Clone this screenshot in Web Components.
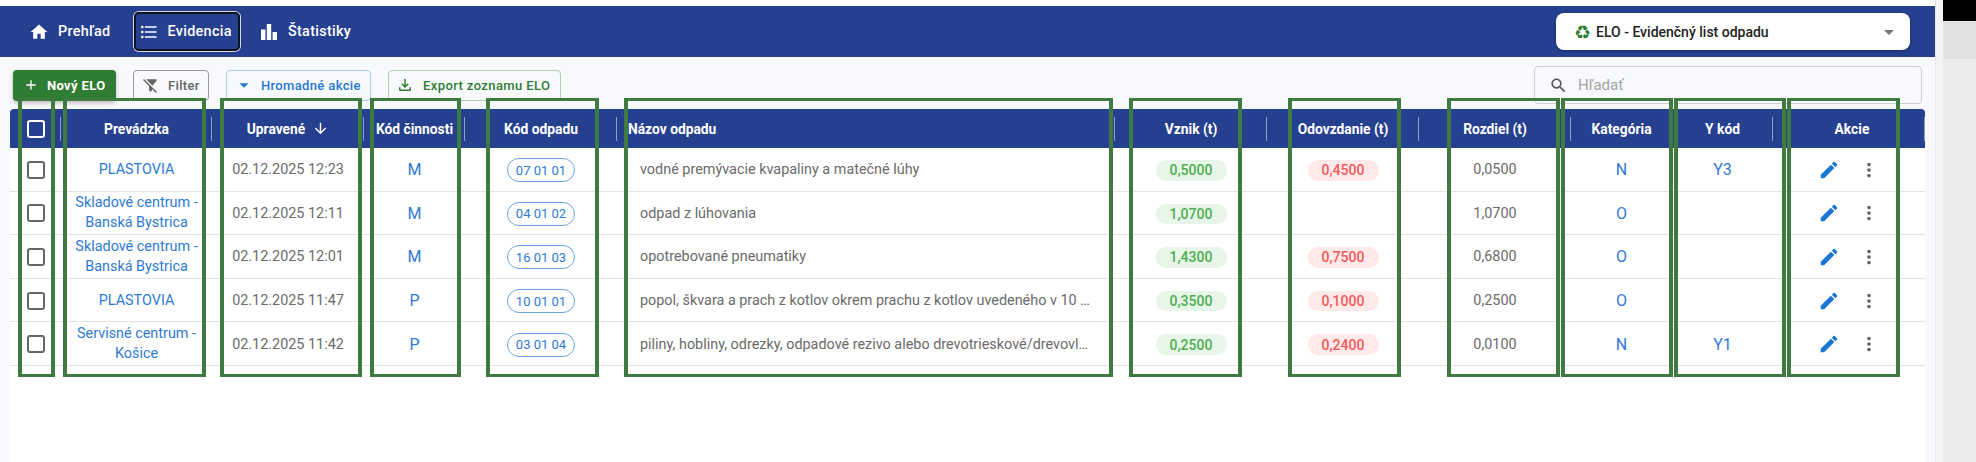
<!DOCTYPE html>
<html lang="sk">
<head>
<meta charset="utf-8">
<title>ELO</title>
<style>
    html, body { margin: 0; height: 100%; overflow: hidden; background: #fff; font-family: Roboto, "Liberation Sans", sans-serif; }
</style>
</head>
<body>
<elo-shell>
    <elo-nav>
        <elo-navitem icon="home">Prehľad</elo-navitem>
        <elo-navitem icon="list" active>Evidencia</elo-navitem>
        <elo-navitem icon="bars">Štatistiky</elo-navitem>
        <elo-select slot="end">ELO - Evidenčný list odpadu</elo-select>
    </elo-nav>
    <elo-toolbar>
        <elo-button kind="primary" icon="add">Nový ELO</elo-button>
        <elo-button kind="plain" icon="filteroff">Filter</elo-button>
        <elo-button kind="blue" icon="drop">Hromadné akcie</elo-button>
        <elo-button kind="green" icon="download">Export zoznamu ELO</elo-button>
        <elo-search slot="end"></elo-search>
    </elo-toolbar>
    <elo-table>
        <elo-row site="PLASTOVIA" date="02.12.2025 12:23" act="M" code="07 01 01" name="vodné premývacie kvapaliny a matečné lúhy" made="0,5000" given="0,4500" diff="0,0500" cat="N" y="Y3"></elo-row>
        <elo-row site="Skladové centrum - Banská Bystrica" date="02.12.2025 12:11" act="M" code="04 01 02" name="odpad z lúhovania" made="1,0700" diff="1,0700" cat="O"></elo-row>
        <elo-row site="Skladové centrum - Banská Bystrica" date="02.12.2025 12:01" act="M" code="16 01 03" name="opotrebované pneumatiky" made="1,4300" given="0,7500" diff="0,6800" cat="O"></elo-row>
        <elo-row site="PLASTOVIA" date="02.12.2025 11:47" act="P" code="10 01 01" name="popol, škvara a prach z kotlov okrem prachu z kotlov uvedeného v 10 …" made="0,3500" given="0,1000" diff="0,2500" cat="O"></elo-row>
        <elo-row site="Servisné centrum - Košice" date="02.12.2025 11:42" act="P" code="03 01 04" name="piliny, hobliny, odrezky, odpadové rezivo alebo drevotrieskové/drevovl…" made="0,2500" given="0,2400" diff="0,0100" cat="N" y="Y1"></elo-row>
    </elo-table>
</elo-shell>
<elo-marks></elo-marks>

<script>
const ICONS = {
    home: 'M10 20v-6h4v6h5v-8h3L12 3 2 12h3v8z',
    list: 'M4 10.5c-.83 0-1.5.67-1.5 1.5s.67 1.5 1.5 1.5 1.5-.67 1.5-1.5-.67-1.5-1.5-1.5zm0-6c-.83 0-1.5.67-1.5 1.5S3.17 7.5 4 7.5 5.5 6.83 5.5 6 4.83 4.5 4 4.5zm0 12c-.83 0-1.5.68-1.5 1.5s.68 1.5 1.5 1.5 1.5-.68 1.5-1.5-.67-1.5-1.5-1.5zM7 19h14v-2H7v2zm0-6h14v-2H7v2zm0-8v2h14V5H7z',
    bars: 'M4 9.5h4.4V20H4zM9.8 4h4.4v16H9.8zm5.8 8H20v8h-4.4z',
    add: 'M19 13h-6v6h-2v-6H5v-2h6V5h2v6h6v2z',
    filteroff: 'M14.77 12.42 20.8 4.8A1 1 0 0 0 20 3.2H5.97zM2.81 2.81 1.39 4.22 10 13v6a1 1 0 0 0 1 1h2a1 1 0 0 0 1-1v-2.17l5.78 5.78 1.41-1.41z',
    drop: 'M7 10l5 5 5-5z',
    download: 'M18 15v3H6v-3H4v3c0 1.1.9 2 2 2h12c1.1 0 2-.9 2-2v-3h-2zm-1-4-1.41-1.41L13 12.17V4h-2v8.17L8.41 9.59 7 11l5 5 5-5z',
    search: 'M15.5 14h-.79l-.28-.27C15.41 12.59 16 11.11 16 9.5 16 5.91 13.09 3 9.5 3S3 5.91 3 9.5 5.91 16 9.5 16c1.61 0 3.09-.59 4.23-1.57l.27.28v.79l5 4.99L20.49 19l-4.99-5zm-6 0C7.01 14 5 11.99 5 9.5S7.01 5 9.5 5 14 7.01 14 9.5 11.99 14 9.5 14z',
    edit: 'M3 17.25V21h3.75L17.81 9.94l-3.75-3.75L3 17.25zM20.71 7.04c.39-.39.39-1.02 0-1.41l-2.34-2.34c-.39-.39-1.02-.39-1.41 0l-1.83 1.83 3.75 3.75 1.83-1.83z',
    more: 'M12 8c1.1 0 2-.9 2-2s-.9-2-2-2-2 .9-2 2 .9 2 2 2zm0 2c-1.1 0-2 .9-2 2s.9 2 2 2 2-.9 2-2-.9-2-2-2zm0 6c-1.1 0-2 .9-2 2s.9 2 2 2 2-.9 2-2-.9-2-2-2z',
    down: 'M20 12l-1.41-1.41L13 16.17V4h-2v12.17l-5.58-5.59L4 12l8 8 8-8z'
};

function icon(name, size, color) {
    return `<svg width="${size}" height="${size}" viewBox="0 0 24 24" fill="${color}" style="display:block;flex:none"><path d="${ICONS[name]}"/></svg>`;
}

class EloShell extends HTMLElement {
    constructor() {
        super();
        this.attachShadow({ mode: 'open' });
        this.shadowRoot.innerHTML = `
            <style>
                :host {
                    display: grid;
                    grid-template-columns: 1935px 8px 1fr;
                    height: 462px;
                }
                .main {
                    display: flex;
                    flex-direction: column;
                    padding-top: 6px;
                    background: linear-gradient(#fff 6px, #f8f9fc 6px);
                    min-width: 0;
                }
                .gutter { background: #f4f4f2; border-left: 1px solid #e6e6e4; }
                .side { display: grid; grid-template-rows: 21px 38px 1fr; }
                .side div:nth-child(1) { background: #000; }
                .side div:nth-child(2) { background: #e2e2e2; }
                .side div:nth-child(3) { background: #ececec; }
            </style>
            <div class="main"><slot></slot></div>
            <div class="gutter"></div>
            <div class="side"><div></div><div></div><div></div></div>
        `;
    }
}

class EloNav extends HTMLElement {
    constructor() {
        super();
        this.attachShadow({ mode: 'open' });
        this.shadowRoot.innerHTML = `
            <style>
                :host {
                    display: flex;
                    align-items: center;
                    height: 51px;
                    background: #25408f;
                    padding: 0 25px 0 20px;
                    gap: 8px;
                    flex: none;
                }
                .end { margin-left: auto; }
            </style>
            <slot></slot>
            <div class="end"><slot name="end"></slot></div>
        `;
    }
}

class EloNavitem extends HTMLElement {
    constructor() {
        super();
        this.attachShadow({ mode: 'open' });
    }
    connectedCallback() {
        const active = this.hasAttribute('active');
        const name = this.getAttribute('icon');
        this.shadowRoot.innerHTML = `
            <style>
                :host { display: block; }
                .item {
                    display: flex;
                    align-items: center;
                    gap: 9px;
                    box-sizing: border-box;
                    width: 105px;
                    height: 39px;
                    padding: 0 0 0 9px;
                    border-radius: 5px;
                    color: #fff;
                    font: 500 14.4px Roboto, sans-serif;
                    letter-spacing: 0.3px;
                    white-space: nowrap;
                }
                .bars { gap: 7px; padding-left: 8px; }
                .active {
                    width: 106px;
                    margin-left: 1px;
                    margin-right: 1px;
                    gap: 8.5px;
                    padding-left: 3px;
                    border: 2px solid #0d1322;
                    box-shadow: 0 0 0 1px #d5d8e4;
                }
            </style>
            <div class="item ${name} ${active ? 'active' : ''}">${icon(name, name === 'bars' ? 24 : 20, '#fff')}<slot></slot></div>
        `;
    }
}

class EloSelect extends HTMLElement {
    constructor() {
        super();
        this.attachShadow({ mode: 'open' });
        this.shadowRoot.innerHTML = `
            <style>
                :host {
                    display: flex;
                    align-items: center;
                    box-sizing: border-box;
                    width: 354px;
                    height: 37px;
                    padding: 0 9px 0 18px;
                    background: #fff;
                    border-radius: 8px;
                    box-shadow: 0 1px 3px rgba(0, 0, 0, 0.35);
                    color: #222;
                    font: 500 14px Roboto, sans-serif;
                }
                .logo { font: 19px "DejaVu Sans", sans-serif; color: #2e7d32; width: 22px; line-height: 18px; }
                .text { flex: 1; }
            </style>
            <span class="logo">♻</span>
            <span class="text"><slot></slot></span>
            ${icon('drop', 24, '#777')}
        `;
    }
}

class EloToolbar extends HTMLElement {
    constructor() {
        super();
        this.attachShadow({ mode: 'open' });
        this.shadowRoot.innerHTML = `
            <style>
                :host {
                    display: flex;
                    align-items: center;
                    gap: 17px;
                    height: 38px;
                    padding: 9px 13px 5px;
                    flex: none;
                }
                .end { margin-left: auto; }
            </style>
            <slot></slot>
            <div class="end"><slot name="end"></slot></div>
        `;
    }
}

class EloButton extends HTMLElement {
    constructor() {
        super();
        this.attachShadow({ mode: 'open' });
    }
    connectedCallback() {
        const kinds = {
            primary: { color: '#fff', css: 'background:#2e7d32;width:103px;padding-left:10px;gap:8px;box-shadow:0 2px 4px rgba(0,0,0,.25);font-weight:700', size: 16 },
            plain: { color: '#666', css: 'border:1px solid #9a9a9a;width:76px;padding-left:8px;gap:9px', size: 17 },
            blue: { color: '#2378d6', css: 'border:1px solid #a6cdf5;width:145px;padding-left:6px;gap:6px', size: 22 },
            green: { color: '#2e7d32', css: 'border:1px solid #a9d3ab;width:173px;padding-left:7px;gap:9px;letter-spacing:.4px', size: 18 }
        };
        const k = kinds[this.getAttribute('kind')];
        this.shadowRoot.innerHTML = `
            <style>
                :host { display: block; }
                .btn {
                    display: flex;
                    align-items: center;
                    box-sizing: border-box;
                    height: 31px;
                    border-radius: 4px;
                    font: 500 13px Roboto, sans-serif;
                    letter-spacing: 0.35px;
                    white-space: nowrap;
                    color: ${k.color};
                    ${k.css};
                }
            </style>
            <div class="btn">${icon(this.getAttribute('icon'), k.size, k.color)}<slot></slot></div>
        `;
    }
}

class EloSearch extends HTMLElement {
    constructor() {
        super();
        this.attachShadow({ mode: 'open' });
        this.shadowRoot.innerHTML = `
            <style>
                :host {
                    display: flex;
                    align-items: center;
                    gap: 10px;
                    box-sizing: border-box;
                    width: 388px;
                    height: 38px;
                    padding-left: 14px;
                    background: #f8f9fc;
                    border: 1px solid #cfcfcf;
                    border-radius: 4px;
                    color: #a5a5a5;
                    font: 400 15px Roboto, sans-serif;
                }
            </style>
            ${icon('search', 19, '#555')}
            <span>Hľadať</span>
        `;
    }
}

class EloTable extends HTMLElement {
    constructor() {
        super();
        this.attachShadow({ mode: 'open' });
        const heads = ['', 'Prevádzka', 'Upravené', 'Kód činnosti', 'Kód odpadu', 'Názov odpadu', 'Vznik (t)', 'Odovzdanie (t)', 'Rozdiel (t)', 'Kategória', 'Y kód', 'Akcie'];
        const cells = heads.map((h, i) => {
            if (i === 0) return `<div class="th"><span class="box"></span></div>`;
            if (i === 2) return `<div class="th">${h}${icon('down', 17, '#fff')}</div>`;
            if (i === 5) return `<div class="th left">${h}</div>`;
            if (i === 11) return `<div class="th last">${h}</div>`;
            return `<div class="th">${h}</div>`;
        }).join('');
        this.shadowRoot.innerHTML = `
            <style>
                :host {
                    --cols: 51px 151px 152px 101px 152px 498px 152px 152px 152px 101px 101px 152px;
                    display: block;
                    flex: 1;
                    margin: 0 10px;
                    background: #fff;
                }
                .head {
                    display: grid;
                    grid-template-columns: var(--cols);
                    height: 39px;
                    background: #25408f;
                    border-radius: 4px 4px 0 0;
                    color: #fff;
                    font: 700 13.8px Roboto, sans-serif;
                }
                .th {
                    display: flex;
                    align-items: center;
                    justify-content: center;
                    gap: 7px;
                    white-space: nowrap;
                    background: linear-gradient(#8f9dc7, #8f9dc7) right center / 1.5px 24px no-repeat;
                }
                .left { justify-content: flex-start; padding-left: 11px; }
                .last { padding-left: 6px; }
                .box {
                    box-sizing: border-box;
                    width: 18px;
                    height: 18px;
                    border: 2px solid #fff;
                    border-radius: 3px;
                }
            </style>
            <div class="head">${cells}</div>
            <slot></slot>
        `;
    }
}

class EloRow extends HTMLElement {
    constructor() {
        super();
        this.attachShadow({ mode: 'open' });
    }
    connectedCallback() {
        const a = n => this.getAttribute(n) || '';
        const made = `<elo-pill tone="green">${a('made')}</elo-pill>`;
        const given = a('given') ? `<elo-pill tone="red">${a('given')}</elo-pill>` : '';
        this.shadowRoot.innerHTML = `
            <style>
                :host {
                    display: grid;
                    grid-template-columns: var(--cols);
                    box-sizing: border-box;
                    height: 43.6px;
                    padding-top: 1px;
                    border-bottom: 1px solid #e2e2e2;
                    color: #6b6b6b;
                    font: 400 14.4px Roboto, sans-serif;
                }
                .td {
                    display: flex;
                    align-items: center;
                    justify-content: center;
                    gap: 18px;
                    min-width: 0;
                }
                .site {
                    padding: 0 8px;
                    text-align: center;
                    line-height: 20px;
                    color: #2f7ad3;
                }
                .letter { color: #2f7ad3; font-size: 16px; }
                .name {
                    justify-content: flex-start;
                    padding-left: 23px;
                    white-space: nowrap;
                    overflow: hidden;
                }
                .box {
                    box-sizing: border-box;
                    width: 18px;
                    height: 18px;
                    border: 2px solid #666;
                    border-radius: 3px;
                }
            </style>
            <div class="td"><span class="box"></span></div>
            <div class="td site">${a('site')}</div>
            <div class="td">${a('date')}</div>
            <div class="td letter">${a('act')}</div>
            <div class="td"><elo-chip>${a('code')}</elo-chip></div>
            <div class="td name">${a('name')}</div>
            <div class="td">${made}</div>
            <div class="td">${given}</div>
            <div class="td">${a('diff')}</div>
            <div class="td letter">${a('cat')}</div>
            <div class="td letter">${a('y')}</div>
            <div class="td">${icon('edit', 22, '#1976d2')}${icon('more', 22, '#666')}</div>
        `;
    }
}

class EloChip extends HTMLElement {
    constructor() {
        super();
        this.attachShadow({ mode: 'open' });
        this.shadowRoot.innerHTML = `
            <style>
                :host {
                    display: flex;
                    align-items: center;
                    justify-content: center;
                    box-sizing: border-box;
                    width: 68px;
                    height: 24px;
                    margin-top: 1px;
                    border: 1px solid #6aa5e8;
                    border-radius: 12px;
                    color: #2f7ad3;
                    font: 400 13px Roboto, sans-serif;
                }
            </style>
            <slot></slot>
        `;
    }
}

class EloPill extends HTMLElement {
    constructor() {
        super();
        this.attachShadow({ mode: 'open' });
    }
    connectedCallback() {
        const green = this.getAttribute('tone') === 'green';
        this.shadowRoot.innerHTML = `
            <style>
                :host {
                    display: flex;
                    align-items: center;
                    justify-content: center;
                    width: 71px;
                    height: 20.5px;
                    margin-top: 1px;
                    border-radius: 10px;
                    background: ${green ? '#e8f5e9' : '#ffe9e9'};
                    color: ${green ? '#4caf50' : '#f25a5a'};
                    font: 500 14px Roboto, sans-serif;
                }
            </style>
            <slot></slot>
        `;
    }
}

// the green frames are annotations drawn over the finished screenshot
class EloMarks extends HTMLElement {
    constructor() {
        super();
        this.attachShadow({ mode: 'open' });
        const spans = [[18, 55], [63, 206], [220, 362], [370, 461], [486, 599], [624, 1113], [1129, 1242], [1288, 1401], [1447, 1560], [1561, 1673], [1674, 1786], [1787, 1900]];
        this.shadowRoot.innerHTML = `
            <style>
                :host { position: absolute; left: 0; top: 0; pointer-events: none; }
                div {
                    position: absolute;
                    top: 98px;
                    height: 279px;
                    box-sizing: border-box;
                    border: solid #3f7a40;
                    border-width: 3px 4px;
                }
            </style>
            ${spans.map(s => `<div style="left:${s[0]}px;width:${s[1] - s[0]}px"></div>`).join('')}
        `;
    }
}

customElements.define('elo-shell', EloShell);
customElements.define('elo-nav', EloNav);
customElements.define('elo-navitem', EloNavitem);
customElements.define('elo-select', EloSelect);
customElements.define('elo-toolbar', EloToolbar);
customElements.define('elo-button', EloButton);
customElements.define('elo-search', EloSearch);
customElements.define('elo-table', EloTable);
customElements.define('elo-row', EloRow);
customElements.define('elo-chip', EloChip);
customElements.define('elo-pill', EloPill);
customElements.define('elo-marks', EloMarks);
</script>
</body>
</html>
